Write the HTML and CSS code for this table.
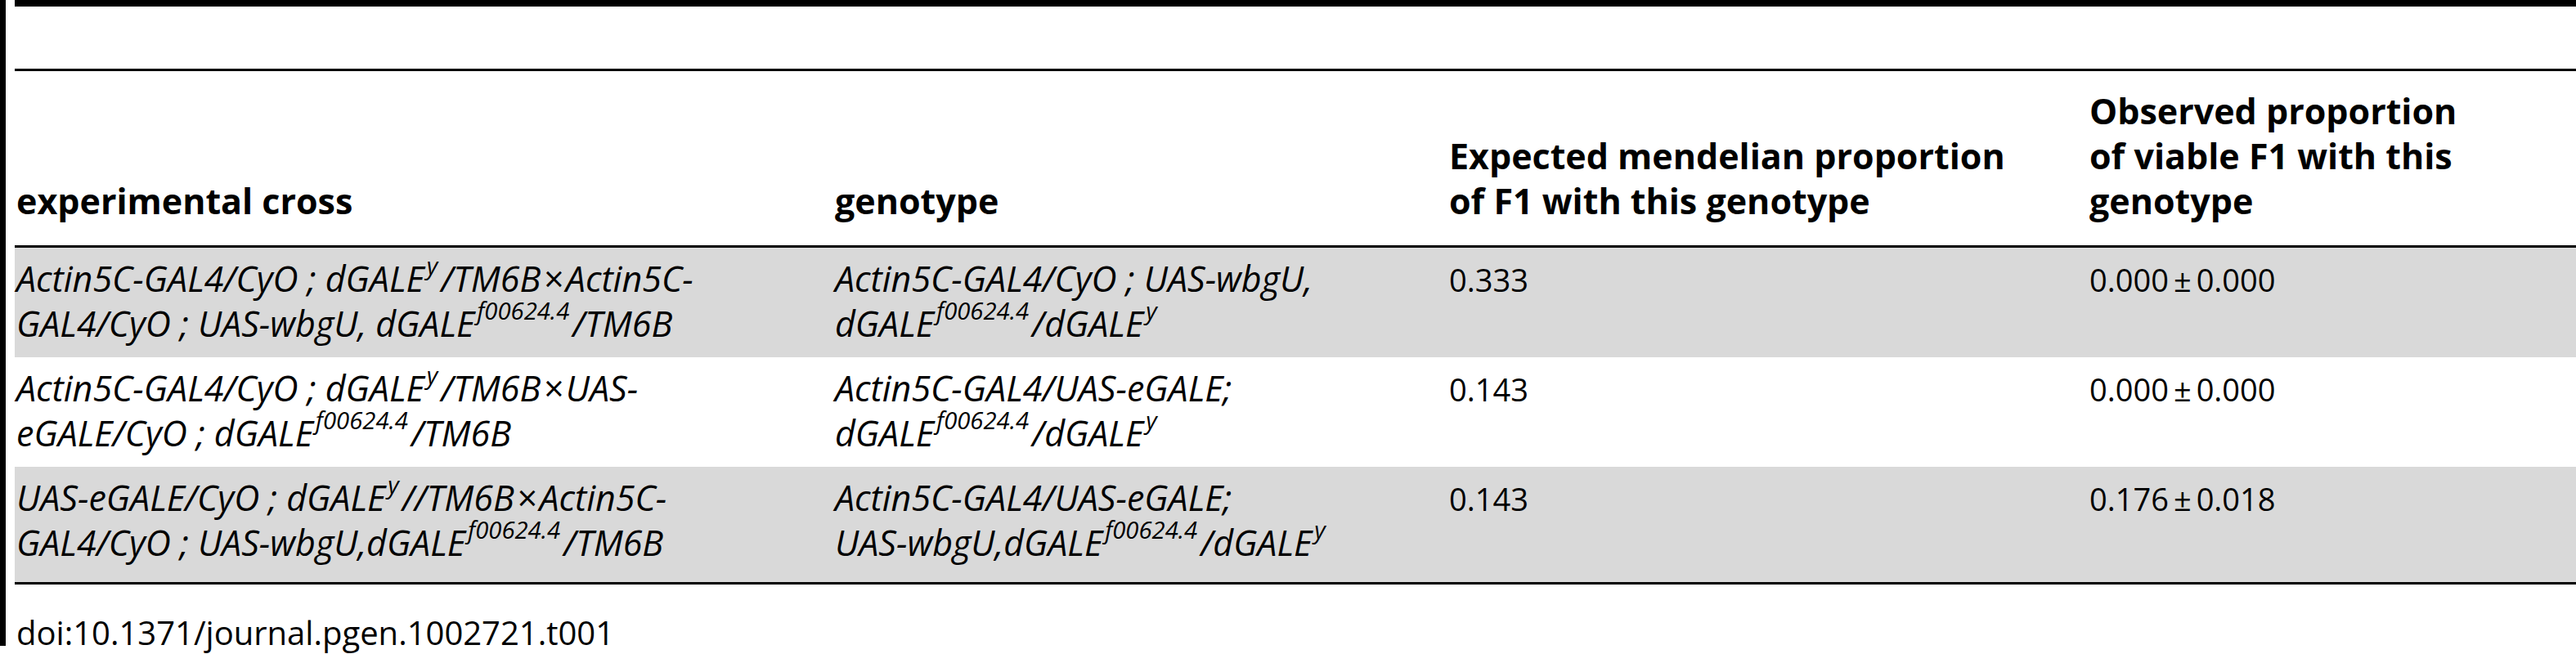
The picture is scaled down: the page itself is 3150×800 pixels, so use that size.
FILE: index.html
```html
<!DOCTYPE html>
<html lang="en">
<head>
<meta charset="utf-8">
<title>Table 1</title>
<link rel="stylesheet" href="styles.css">
</head>
<body>
<div class="page">
  <div class="side-bar"></div>
  <div class="content">
    <div class="top-rule"></div>
    <table class="data">
      <colgroup>
        <col class="c1">
        <col class="c2">
        <col class="c3">
        <col class="c4">
      </colgroup>
      <thead>
        <tr>
          <th>experimental cross</th>
          <th>genotype</th>
          <th>Expected mendelian proportion<br>of F1 with this genotype</th>
          <th>Observed proportion<br>of viable F1 with this<br>genotype</th>
        </tr>
      </thead>
      <tbody>
        <tr class="shade">
          <td class="it">Actin5C-GAL4/CyO ; dGALE<sup>y</sup>/TM6B<span class="x">×</span>Actin5C-<br>GAL4/CyO ; UAS-wbgU, dGALE<sup>f00624.4</sup>/TM6B</td>
          <td class="it">Actin5C-GAL4/CyO ; UAS-wbgU,<br>dGALE<sup>f00624.4</sup>/dGALE<sup>y</sup></td>
          <td class="num">0.333</td>
          <td class="num">0.000<span class="pm">±</span>0.000</td>
        </tr>
        <tr>
          <td class="it">Actin5C-GAL4/CyO ; dGALE<sup>y</sup>/TM6B<span class="x">×</span>UAS-<br>eGALE/CyO ; dGALE<sup>f00624.4</sup>/TM6B</td>
          <td class="it">Actin5C-GAL4/UAS-eGALE;<br>dGALE<sup>f00624.4</sup>/dGALE<sup>y</sup></td>
          <td class="num">0.143</td>
          <td class="num">0.000<span class="pm">±</span>0.000</td>
        </tr>
        <tr class="shade last">
          <td class="it">UAS-eGALE/CyO ; dGALE<sup>y</sup>//TM6B<span class="x">×</span>Actin5C-<br>GAL4/CyO ; UAS-wbgU,dGALE<sup>f00624.4</sup>/TM6B</td>
          <td class="it">Actin5C-GAL4/UAS-eGALE;<br>UAS-wbgU,dGALE<sup>f00624.4</sup>/dGALE<sup>y</sup></td>
          <td class="num">0.143</td>
          <td class="num">0.176<span class="pm">±</span>0.018</td>
        </tr>
      </tbody>
    </table>
    <p class="doi">doi:10.1371/journal.pgen.1002721.t001</p>
  </div>
</div>
</body>
</html>
```

FILE: styles.css
```css
html, body {
  margin: 0;
  padding: 0;
  background: #fff;
}

body {
  font-family: "Open Sans", "Noto Sans", sans-serif;
  font-size: 38px;
  color: #000;
}

.page {
  display: flex;
  gap: 11px;
  height: 800px;
  overflow: hidden;
}

.side-bar {
  flex: none;
  width: 7px;
  height: 790px;
  background: #000;
}

.content {
  flex: 1;
  min-width: 0;
}

.top-rule {
  height: 8px;
  background: #000;
}

.data {
  width: 100%;
  table-layout: fixed;
  border-collapse: separate;
  border-spacing: 0;
  margin-top: 76px;
  border-top: 3px solid #000;
}

.c1 { width: 1001px; }
.c2 { width: 751px; }
.c3 { width: 783px; }
.c4 { width: auto; }

.data th {
  text-align: left;
  vertical-align: bottom;
  font-size: 43px;
  font-weight: 700;
  line-height: 55px;
  padding: 21px 2px 27px;
  border-bottom: 3px solid #000;
  white-space: nowrap;
}

.data td {
  text-align: left;
  vertical-align: top;
  font-weight: 400;
  line-height: 55px;
  padding: 12px 2px;
  white-space: nowrap;
}

.data td.it {
  font-size: 43px;
  font-style: italic;
  padding-top: 10px;
  padding-bottom: 14px;
}

.data td.num {
  font-size: 38px;
}

.data .shade td {
  background: #d9d9d9;
}

.data .last td {
  padding-bottom: 19px;
  border-bottom: 3px solid #000;
}

.data .last td.it {
  padding-bottom: 21px;
}

.data sup {
  font-size: 0.68em;
  line-height: 0;
  vertical-align: 0.72em;
  margin: 0 4px 0 3px;
}

.x {
  margin: 0 3px;
}

.pm {
  margin: 0 6px;
}

.doi {
  margin: 31px 0 0;
  padding-left: 2px;
  font-size: 40px;
  line-height: 55px;
}
```
